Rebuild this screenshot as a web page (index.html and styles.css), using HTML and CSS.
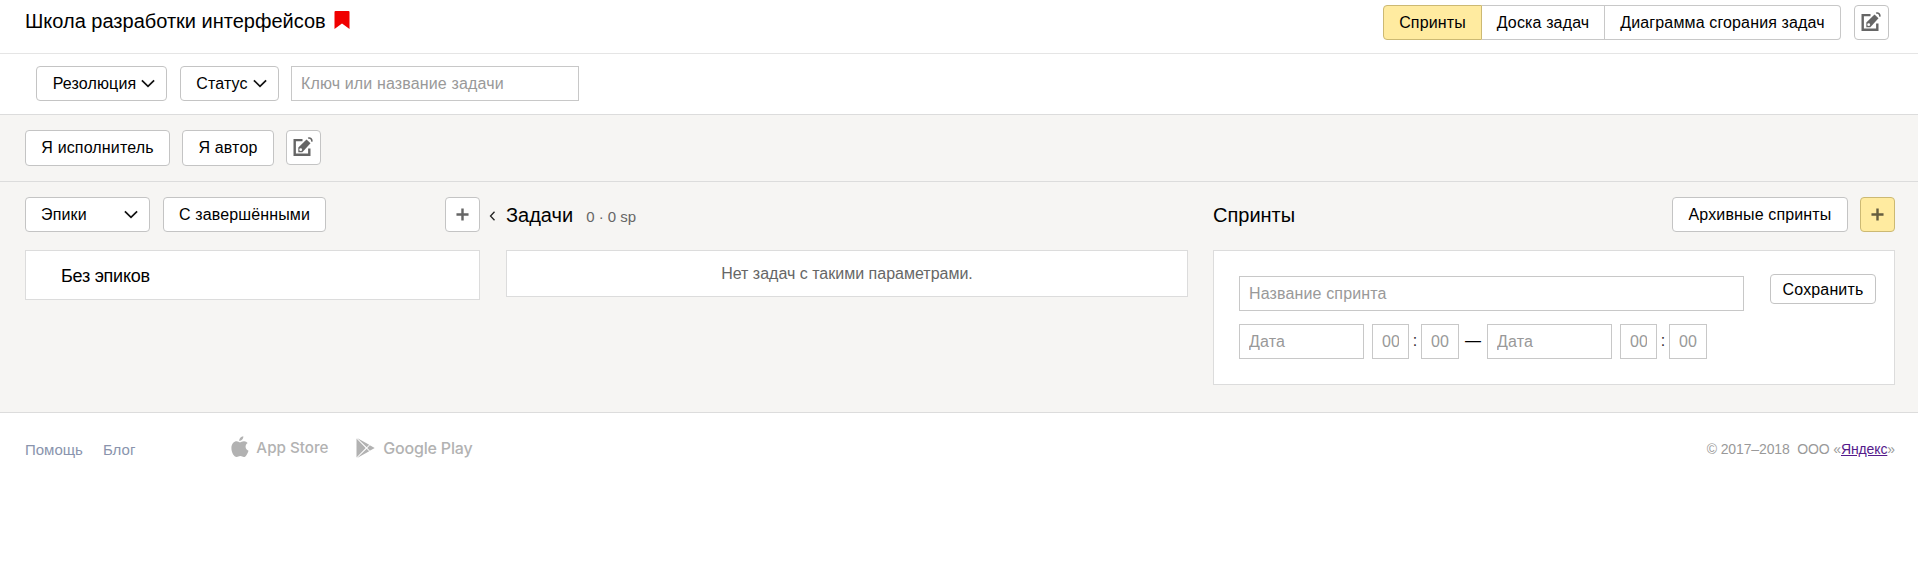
FILE: index.html
```html
<!DOCTYPE html>
<html lang="ru">
<head>
<meta charset="utf-8">
<title>Школа разработки интерфейсов</title>
<link rel="stylesheet" href="styles.css">
</head>
<body>
<svg class="defs" width="0" height="0">
  <symbol id="edit" viewBox="0 0 20 20">
    <path d="M9.500 3.100H1.700v14.700h14.600V11.500" fill="none" stroke="#666" stroke-width="2.400"/>
    <path d="M5.300 15.200v-4.700l8.200-8.100 4 3.900-8.200 8.900z" fill="#666"/>
    <path d="M15.200 1.300c1.800-1 4.200.9 3.500 3.300" fill="none" stroke="#666" stroke-width="1.600"/>
    <circle cx="7.700" cy="12.700" r="1.400" fill="#fff"/>
  </symbol>
  <symbol id="arrow" viewBox="0 0 14 9"><path d="M.9 1.300 7 7.400l6.100-6.100" fill="none" stroke="#111" stroke-width="1.700"/></symbol>
  <symbol id="plus" viewBox="0 0 14 14"><path d="M7 .5v13M.5 7h13" fill="none" stroke="currentColor" stroke-width="2.600"/></symbol>
</svg>

<header class="header">
  <h1 class="header__title">Школа разработки интерфейсов</h1>
  <svg class="header__flag" width="16" height="18" viewBox="0 0 16 18"><path d="M1.500 0h13q1 0 1 1v17L8 12.600.5 18V1q0-1 1-1z" fill="#f00000"/></svg>
  <nav class="tabs">
    <a class="tab tab_active">Спринты</a><a class="tab">Доска задач</a><a class="tab">Диаграмма сгорания задач</a>
  </nav>
  <button class="button button_icon button_edit"><svg width="20" height="20"><use href="#edit"/></svg></button>
</header>

<section class="filters">
  <button class="button filters__resolution">Резолюция<svg width="14" height="9"><use href="#arrow"/></svg></button>
  <button class="button filters__status">Статус<svg width="14" height="9"><use href="#arrow"/></svg></button>
  <input class="input filters__search" placeholder="Ключ или название задачи">
</section>

<section class="presets">
  <button class="button presets__assignee">Я исполнитель</button>
  <button class="button presets__author">Я автор</button>
  <button class="button button_icon button_edit"><svg width="20" height="20"><use href="#edit"/></svg></button>
</section>

<main class="board">
  <section class="epics">
    <div class="column-head">
      <button class="button epics__select">Эпики<svg width="14" height="9"><use href="#arrow"/></svg></button>
      <button class="button epics__done">С завершёнными</button>
      <button class="button button_icon epics__add"><svg width="13" height="13"><use href="#plus"/></svg></button>
    </div>
    <div class="card epics__card">Без эпиков</div>
  </section>
  <svg class="collapse" width="7" height="10" viewBox="0 0 7 10"><path d="M5.500.7 1.500 5l4 4.300" fill="none" stroke="#222" stroke-width="1.300"/></svg>
  <section class="tasks">
    <div class="column-head"><h2 class="column-title">Задачи</h2><span class="tasks__count">0 · 0 sp</span></div>
    <div class="card tasks__card">Нет задач с такими параметрами.</div>
  </section>
  <section class="sprints">
    <div class="column-head">
      <h2 class="column-title">Спринты</h2>
      <button class="button sprints__archive">Архивные спринты</button>
      <button class="button button_icon button_action"><svg width="13" height="13"><use href="#plus"/></svg></button>
    </div>
    <form class="card sprint-form">
      <div class="sprint-form__fields">
        <input class="input sprint-form__name" placeholder="Название спринта">
        <div class="period">
          <input class="input period__date" placeholder="Дата">
          <input class="input period__hour" placeholder="00"><span class="period__colon">:</span><input class="input period__minute" placeholder="00">
          <span class="period__dash">—</span>
          <input class="input period__date" placeholder="Дата">
          <input class="input period__hour" placeholder="00"><span class="period__colon">:</span><input class="input period__minute" placeholder="00">
        </div>
      </div>
      <button class="button sprint-form__save" type="button">Сохранить</button>
    </form>
  </section>
</main>

<footer class="footer">
  <a class="footer__link footer__help">Помощь</a>
  <a class="footer__link">Блог</a>
  <a class="store store_apple">
    <svg width="18" height="22" viewBox="0 0 18 22"><path d="M12.300.3c.2 2.500-1.600 4.600-4 4.600C8 2.700 10 .5 12.300.3zM8.900 6.300c1 0 2.200-1.200 4.200-1.100 1.500.1 2.800.8 3.600 1.900-3.200 1.900-2.600 6.300.8 7.600-.8 2.500-2.500 6.300-4.600 6.300-1.400 0-1.800-.9-3.600-.9s-2.300.9-3.600.9C2.900 21 .4 16.500.4 12c0-4.400 2.700-6.800 5.200-6.800 1.500 0 2.600 1.100 3.300 1.100z" fill="#b2b2b2"/></svg>
    <span>App Store</span>
  </a>
  <a class="store store_google">
    <svg width="19" height="20" viewBox="0 0 19 20"><path d="M.5.5v19L9.700 10zM1.100 0l9.600 9.300 2.500-2.500zM1.100 20l9.600-9.300 2.500 2.500zM11.300 10l2.500-2.700L18.700 10l-4.900 2.700z" fill="#b2b2b2"/></svg>
    <span>Google Play</span>
  </a>
  <div class="footer__copy">© 2017–2018&nbsp; ООО «<a class="footer__yandex" href="#">Яндекс</a>»</div>
</footer>
</body>
</html>
```
FILE: styles.css
```css
* { box-sizing: border-box; }
body { margin: 0; background: #fff; color: #000; font: 16px/20px "Liberation Sans", Arial, sans-serif; }
h1, h2 { margin: 0; font-weight: 400; }
svg { flex: none; display: block; }
.defs { position: absolute; }

.button { display: flex; align-items: center; justify-content: center; flex: none; height: 35px; padding: 0; border: 1px solid #c4c4c4; border-radius: 4px; background: #fff; color: #000; font: inherit; letter-spacing: .14px; white-space: nowrap; }
.button_icon { width: 35px; color: #666; }
.button_edit { padding: 0 1px 2px 0; }
.button_action { background: #ffeba0; border-color: #ccb973; color: #665e40; }
.input { flex: none; height: 35px; margin: 0; padding: 0 9px; border: 1px solid #c8c8c8; border-radius: 0; background: #fff; font: inherit; letter-spacing: .14px; }
.input::placeholder { color: #999; opacity: 1; }

.header { display: flex; align-items: flex-start; height: 54px; padding: 5px 29px 0 25px; border-bottom: 1px solid #e5e5e5; }
.header__title { width: 302px; padding-top: 4px; font-size: 20px; line-height: 24px; white-space: nowrap; }
.header__flag { margin: 6px 0 0 7px; }
.tabs { display: flex; margin: 0 13px 0 auto; }
.tab { display: flex; align-items: center; justify-content: center; width: 123px; height: 35px; border: 1px solid #c8c8c8; border-left: 0; letter-spacing: .14px; white-space: nowrap; }
.tab_active { width: 99px; border: 1px solid #ccb973; border-radius: 4px 0 0 4px; background: #ffeba0; }
.tab:last-child { width: 236px; border-radius: 0 4px 4px 0; }

.filters { display: flex; height: 61px; padding: 12px 36px 0; border-bottom: 1px solid #dcdcdc; }
.filters__resolution { width: 131px; margin-right: 13px; padding-left: 5px; gap: 5px; }
.filters__status { width: 99px; margin-right: 12px; padding-left: 4px; gap: 5px; }
.filters__search { width: 288px; }

.presets { display: flex; height: 67px; padding: 15px 25px 0; border-bottom: 1px solid #dcdcdc; background: #f6f5f3; }
.presets__assignee { width: 145px; height: 36px; margin-right: 12px; }
.presets__author { width: 92px; height: 36px; margin-right: 12px; }

.board { display: flex; align-items: flex-start; height: 231px; padding: 15px 23px 0 25px; border-bottom: 1px solid #dcdcdc; background: #f6f5f3; }
.column-head { display: flex; align-items: center; height: 35px; margin-bottom: 18px; }
.column-title { font-size: 20px; line-height: 24px; }
.card { border: 1px solid #dcdcdc; background: #fff; }
.epics { width: 455px; }
.epics__select { width: 125px; margin-right: 13px; padding: 0 11px 0 15px; justify-content: space-between; }
.epics__done { width: 163px; }
.epics__add { margin-left: auto; }
.epics__card { height: 50px; padding: 15px 35px; font-size: 18px; letter-spacing: -.25px; }
.collapse { margin: 14px 10px 0 9px; }
.tasks { width: 682px; margin-right: 25px; }
.tasks__count { margin: 4px 0 0 13px; color: #666; font-size: 15px; }
.tasks__card { height: 47px; padding-top: 13px; color: #666; text-align: center; }
.sprints { flex: 1; }
.sprints__archive { width: 176px; margin: 0 12px 0 auto; }
.sprint-form { display: flex; align-items: flex-start; justify-content: space-between; height: 135px; padding: 25px 18px 0 25px; }
.sprint-form__name { display: block; width: 505px; margin-bottom: 13px; }
.sprint-form__save { width: 106px; height: 30px; margin-top: -2px; padding-top: 1px; }
.period { display: flex; align-items: center; }
.period__date { width: 125px; margin-right: 8px; }
.period__hour { width: 37px; }
.period__minute { width: 38px; }
.period__colon { width: 12px; padding-bottom: 2px; color: #333; text-align: center; }
.period__dash { width: 28px; padding-bottom: 2px; text-align: center; }

.footer { display: flex; align-items: flex-start; padding: 26px 23px 0 25px; }
.footer__link { margin-top: 1px; color: #8a94ad; font-size: 15px; }
.footer__help { margin-right: 20px; }
.store { display: flex; color: #b2b2b2; white-space: nowrap; }
.store_apple { width: 100px; margin: -3px 25px 0 96px; gap: 7px; font: 500 15.200px/20px Inter, sans-serif; }
.store_google { gap: 8px; margin-top: -1px; font: 500 16px/20px Inter, sans-serif; letter-spacing: -.2px; }
.store_apple span { padding-top: 2px; }
.footer__copy { margin-left: auto; color: #999; font-size: 14px; letter-spacing: -.12px; white-space: nowrap; }
.footer__yandex { color: #551a8b; }
```
